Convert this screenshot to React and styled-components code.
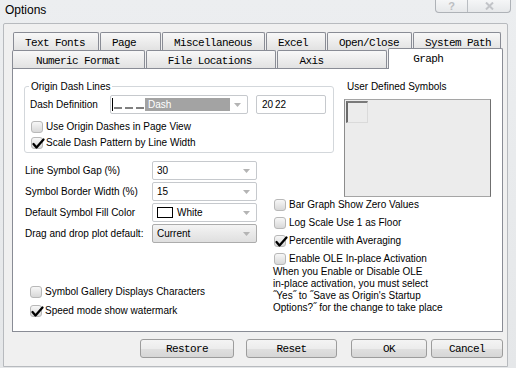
import React from "react";
import styled, { createGlobalStyle } from "styled-components";

const GlobalStyle = createGlobalStyle`
  html, body {
    margin: 0;
    padding: 0;
    background: #e8e9eb;
  }
  body {
    font-family: "Liberation Sans", Arial, sans-serif;
    font-size: 10px;
    color: #000;
  }
  * { box-sizing: border-box; }
`;

const Window = styled.div`
  width: 516px;
  height: 368px;
  background: linear-gradient(#eceef0, #e5e7e9);
  display: flex;
  flex-direction: column;
  overflow: hidden;
`;

const TitleBar = styled.div`
  height: 23px;
  flex: none;
  display: flex;
  align-items: flex-start;
  padding-left: 5px;
`;

const Title = styled.div`
  font-size: 12px;
  line-height: 14px;
  margin-top: 3px;
`;

const Caption = styled.div`
  margin-left: auto;
  margin-right: 5px;
  display: flex;
  height: 13px;
  border: 1px solid #aeb2b7;
  border-top: none;
  border-radius: 0 0 4px 4px;
  background: linear-gradient(#f5f6f7, #e6e8ea);
  overflow: hidden;
`;

const CaptionButton = styled.div`
  width: ${({ $w }) => $w}px;
  display: flex;
  align-items: center;
  justify-content: center;
  color: #bcbec2;
  font-weight: bold;
  font-size: 11px;
  & + & {
    border-left: 1px solid #b9bdc2;
  }
`;

const Client = styled.div`
  flex: 1;
  margin: 0 8px 1px 3px;
  background: #f0f0f0;
  border: 1px solid #b7babe;
  border-radius: 2px 2px 0 0;
  padding: 8px 4px 8px 8px;
  display: flex;
  flex-direction: column;
`;

const TabRow = styled.div`
  display: flex;
  align-items: flex-end;
  gap: 1px;
  height: 18px;
  padding-left: ${({ $indent }) => $indent}px;
`;

const Tab = styled.div`
  width: ${({ $w }) => $w}px;
  height: ${({ $active }) => ($active ? 21 : 18)}px;
  margin-bottom: ${({ $active }) => ($active ? -1 : 0)}px;
  position: relative;
  z-index: ${({ $active }) => ($active ? 1 : 0)};
  border: 1px solid #898c95;
  border-bottom: none;
  border-radius: 2px 2px 0 0;
  background: ${({ $active }) =>
    $active ? "#fff" : "linear-gradient(#f8f8f8, #e2e2e2)"};
  display: flex;
  align-items: center;
  padding: ${({ $active }) => ($active ? "0" : "2px")} 0 0 ${({ $pad }) => $pad}px;
  font-family: "Liberation Mono", "Courier New", monospace;
  font-size: 11px;
  letter-spacing: -0.6px;
  white-space: nowrap;
`;

const Panel = styled.div`
  height: 264px;
  flex: none;
  border: 1px solid #898c95;
  background: #fff;
  padding: 12px 0 0 11px;
  display: grid;
  grid-template-columns: 249px 61px 10px 147px;
  grid-template-rows: 72px 46px 83px auto;
  grid-template-areas:
    "group group . sym"
    "form  .     . sym"
    "form  chk   chk chk"
    "bot   chk   chk chk";
`;

const GroupBox = styled.fieldset`
  grid-area: group;
  margin: 0;
  min-width: 0;
  border: 1px solid #d3d7db;
  border-radius: 3px;
  padding: 3px 6px 4px 4px;
  display: flex;
  flex-direction: column;
`;

const Legend = styled.legend`
  padding: 0 2px;
  line-height: 11px;
`;

const DashRow = styled.div`
  display: flex;
  align-items: center;
  height: 19px;
  margin-bottom: 7px;
`;

const DashLabel = styled.span`
  width: 81px;
  padding-left: 1px;
  white-space: nowrap;
`;

const Select = styled.div`
  width: ${({ $w }) => $w}px;
  height: 19px;
  border: 1px solid ${({ $button }) => ($button ? "#acacac" : "#c6c9cd")};
  border-radius: 2px;
  background: ${({ $button }) =>
    $button ? "linear-gradient(#f4f4f4, #dfdfdf)" : "#fff"};
  display: flex;
  align-items: center;
  padding: 0 6px 0 ${({ $pad }) => $pad ?? 4}px;
  white-space: nowrap;
  gap: 4px;
`;

const SelectValue = styled.span`
  flex: 1;
  display: flex;
  align-items: center;
  height: 100%;
`;

const DashSample = styled.span`
  width: 33px;
  height: 13px;
  border-left: 1px solid #000;
  background: #fff;
  display: flex;
  align-items: flex-end;
  padding-bottom: 2px;
`;

const Highlight = styled.span`
  flex: 1;
  height: 13px;
  background: #a3a3a3;
  color: #fff;
  padding-left: 3px;
  line-height: 13px;
`;

const TextBox = styled.div`
  width: 70px;
  height: 19px;
  margin-left: 8px;
  border: 1px solid #c6c9cd;
  border-radius: 2px;
  background: #fff;
  padding-left: 5px;
  line-height: 17px;
  word-spacing: -1px;
`;

const CheckList = styled.div`
  display: flex;
  flex-direction: column;
  gap: ${({ $gap }) => $gap}px;
  margin-left: ${({ $indent }) => $indent}px;
  margin-top: ${({ $top }) => $top || 0}px;
`;

const CheckRow = styled.label`
  display: flex;
  align-items: center;
  gap: 3px;
  height: 12px;
  line-height: 12px;
  white-space: nowrap;
`;

const Box = styled.span`
  width: 12px;
  height: 12px;
  flex: none;
  position: relative;
  border: 1px solid #b8b8b8;
  border-radius: 3px;
  background: linear-gradient(#f7f7f7, #d8d8d8);
  & > svg {
    position: absolute;
    left: 0;
    top: -1px;
    overflow: visible;
  }
`;

const FormGrid = styled.div`
  grid-area: form;
  margin: 8px 0 0 1px;
  display: grid;
  grid-template-columns: 127px 105px;
  grid-auto-rows: 19px;
  row-gap: 2px;
  align-items: center;
  align-self: start;
`;

const FormLabel = styled.span`
  white-space: nowrap;
`;

const Swatch = styled.span`
  width: 16px;
  height: 11px;
  border: 1px solid #000;
  background: #fff;
  margin-right: 4px;
`;

const SymbolArea = styled.div`
  grid-area: sym;
  display: flex;
  flex-direction: column;
`;

const SymbolLabel = styled.div`
  line-height: 12px;
  padding-left: 3px;
  margin-bottom: 6px;
`;

const SymbolBox = styled.div`
  width: 147px;
  height: 98px;
  background: #ececec;
  border: 1px solid #a5a5a5;
  border-right-color: #6f6f6f;
  border-left-color: #8c8c8c;
  padding: 1px 0 0 1px;
`;

const SymbolCell = styled.div`
  width: 22px;
  height: 22px;
  border: 1px solid #dadada;
  border-left: 2px solid #6a6a6a;
  border-top: 2px solid #7a7a7a;
`;

const RightChecks = styled.div`
  grid-area: chk;
  display: flex;
  flex-direction: column;
`;

const Note = styled.div`
  margin-top: 1px;
  line-height: 12px;
  white-space: nowrap;
`;

const BottomChecks = styled(CheckList)`
  grid-area: bot;
`;

const ButtonRow = styled.div`
  display: flex;
  justify-content: flex-end;
  margin-top: 7px;
`;

const Button = styled.button`
  width: ${({ $w }) => $w}px;
  height: 19px;
  margin-left: ${({ $gap }) => $gap}px;
  border: 1px solid #9c9c9c;
  border-radius: 3px;
  background: linear-gradient(#f4f4f4 0%, #ececec 50%, #e0e0e0 51%, #d6d6d6 100%);
  font-family: "Liberation Mono", "Courier New", monospace;
  font-size: 11px;
  letter-spacing: -0.6px;
  color: #000;
  padding: 1px 0 0;
`;

const Arrow = () => (
  <svg width="7" height="4" viewBox="0 0 7 4">
    <path d="M0 0H7L3.5 4Z" fill="#b4b4b4" />
  </svg>
);

const Tick = () => (
  <svg width="13" height="13" viewBox="0 0 13 13">
    <path
      d="M1.5 7L4.5 10.5L11.5 2.5"
      fill="none"
      stroke="#000"
      strokeWidth="2.3"
      strokeLinecap="round"
      strokeLinejoin="round"
    />
  </svg>
);

const Check = ({ checked, children }) => (
  <CheckRow>
    <Box>{checked && <Tick />}</Box>
    <span>{children}</span>
  </CheckRow>
);

const Dropdown = ({ w, button, children }) => (
  <Select $w={w} $button={button}>
    <SelectValue>{children}</SelectValue>
    <Arrow />
  </Select>
);

const backTabs = [
  ["Text Fonts", 86],
  ["Page", 61],
  ["Miscellaneous", 103],
  ["Excel", 60],
  ["Open/Close", 85],
  ["System Path", 88],
];

const frontTabs = [
  ["Numeric Format", 133, 23],
  ["File Locations", 131, 21],
  ["Axis", 110, 21],
];

export default function App() {
  return (
    <>
      <GlobalStyle />
      <Window>
        <TitleBar>
          <Title>Options</Title>
          <Caption>
            <CaptionButton $w={31}>?</CaptionButton>
            <CaptionButton $w={43}>
              <svg width="9" height="8" viewBox="0 0 9 8">
                <path d="M1 0.5L8 7.5M8 0.5L1 7.5" stroke="#c2c4c8" strokeWidth="2" />
              </svg>
            </CaptionButton>
          </Caption>
        </TitleBar>

        <Client>
          <TabRow $indent={1}>
            {backTabs.map(([label, w]) => (
              <Tab key={label} $w={w} $pad={11}>
                {label}
              </Tab>
            ))}
          </TabRow>
          <TabRow $indent={0}>
            {frontTabs.map(([label, w, pad]) => (
              <Tab key={label} $w={w} $pad={pad}>
                {label}
              </Tab>
            ))}
            <Tab $w={115} $pad={24} $active>
              Graph
            </Tab>
          </TabRow>

          <Panel>
            <GroupBox>
              <Legend>Origin Dash Lines</Legend>
              <DashRow>
                <DashLabel>Dash Definition</DashLabel>
                <Select $w={138} $pad={1}>
                  <SelectValue>
                    <DashSample>
                      <svg width="31" height="2" viewBox="0 0 31 2">
                        <path d="M1 1H9M12 1H20M23 1H31" stroke="#000" strokeWidth="1" />
                      </svg>
                    </DashSample>
                    <Highlight>Dash</Highlight>
                  </SelectValue>
                  <Arrow />
                </Select>
                <TextBox>20 22</TextBox>
              </DashRow>
              <CheckList $gap={4} $indent={2}>
                <Check>Use Origin Dashes in Page View</Check>
                <Check checked>Scale Dash Pattern by Line Width</Check>
              </CheckList>
            </GroupBox>

            <SymbolArea>
              <SymbolLabel>User Defined Symbols</SymbolLabel>
              <SymbolBox>
                <SymbolCell />
              </SymbolBox>
            </SymbolArea>

            <FormGrid>
              <FormLabel>Line Symbol Gap (%)</FormLabel>
              <Dropdown w={105}>30</Dropdown>
              <FormLabel>Symbol Border Width (%)</FormLabel>
              <Dropdown w={105}>15</Dropdown>
              <FormLabel>Default Symbol Fill Color</FormLabel>
              <Dropdown w={105}>
                <Swatch />
                White
              </Dropdown>
              <FormLabel>Drag and drop plot default:</FormLabel>
              <Dropdown w={105} button>
                Current
              </Dropdown>
            </FormGrid>

            <RightChecks>
              <CheckList $gap={6} $indent={1}>
                <Check>Bar Graph Show Zero Values</Check>
                <Check>Log Scale Use 1 as Floor</Check>
                <Check checked>Percentile with Averaging</Check>
                <Check>Enable OLE In-place Activation</Check>
              </CheckList>
              <Note>
                When you Enable or Disable OLE
                <br />
                in-place activation, you must select
                <br />
                ˝Yes˝ to ˝Save as Origin's Startup
                <br />
                Options?˝ for the change to take place
              </Note>
            </RightChecks>

            <BottomChecks $gap={7} $indent={6} $top={4}>
              <Check>Symbol Gallery Displays Characters</Check>
              <Check checked>Speed mode show watermark</Check>
            </BottomChecks>
          </Panel>

          <ButtonRow>
            <Button $w={94} $gap={0}>Restore</Button>
            <Button $w={91} $gap={12}>Reset</Button>
            <Button $w={76} $gap={14}>OK</Button>
            <Button $w={72} $gap={4}>Cancel</Button>
          </ButtonRow>
        </Client>
      </Window>
    </>
  );
}
